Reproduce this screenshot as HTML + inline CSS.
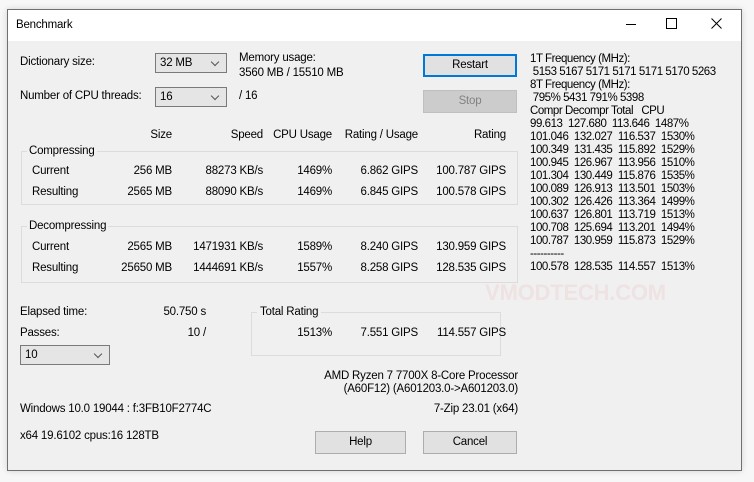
<!DOCTYPE html>
<html><head><style>
body{margin:0;width:754px;height:482px;background:#f7f7f7;font-family:"Liberation Sans",sans-serif;font-size:11.5px;letter-spacing:-0.2px;color:#000;position:relative;overflow:hidden}
.win{position:absolute;left:7px;top:9px;width:733px;height:460px;border:1px solid #707070;background:#f0f0f0;box-shadow:0 0 6px rgba(0,0,0,.15)}
.tb{position:absolute;left:0;top:0;width:733px;height:31px;background:#fff}
.t{position:absolute;white-space:nowrap;line-height:14px}
.r{text-align:right}
.cb{position:absolute;height:20px;border:1px solid #7a7a7a;background:#e5e5e5;box-sizing:border-box;padding:2px 4px;line-height:14px}
.cb:after{content:"";position:absolute;right:8px;top:5px;width:5px;height:5px;border-right:1px solid #555;border-bottom:1px solid #555;transform:rotate(45deg)}
.btn{position:absolute;height:23px;box-sizing:border-box;border:1px solid #adadad;background:#e1e1e1;text-align:center;line-height:20px}
.gb{position:absolute;border:1px solid #dcdcdc;box-sizing:border-box}
.mono{position:absolute;left:530px;white-space:pre;line-height:13px;font-size:11.5px;letter-spacing:-0.45px}
</style></head><body>
<div class="win">
<div class="tb"></div>
</div>
<div class="t" style="left:16px;top:18px">Benchmark</div>
<div style="position:absolute;left:626px;top:24px;width:10px;height:1px;background:#000"></div>
<div style="position:absolute;left:666px;top:18px;width:9px;height:9px;border:1px solid #000"></div>
<svg style="position:absolute;left:711px;top:18px" width="11" height="11"><path d="M0.5 0.5L10.5 10.5M10.5 0.5L0.5 10.5" stroke="#000" stroke-width="1"/></svg>

<div class="t" style="left:20px;top:55px">Dictionary size:</div>
<div class="cb" style="left:155px;top:53px;width:72px">32 MB</div>
<div class="t" style="left:239px;top:51px">Memory usage:</div>
<div class="t" style="left:239px;top:66px">3560 MB / 15510 MB</div>
<div class="t" style="left:20px;top:89px">Number of CPU threads:</div>
<div class="cb" style="left:155px;top:87px;width:72px">16</div>
<div class="t" style="left:239px;top:89px">/ 16</div>
<div class="btn" style="left:423px;top:54px;width:94px;border:2px solid #0078d7;line-height:19px">Restart</div>
<div class="btn" style="left:423px;top:90px;width:94px;background:#cccccc;border-color:#bfbfbf;color:#838383">Stop</div>

<div class="t r" style="right:582px;top:128px">Size</div>
<div class="t r" style="right:491px;top:128px">Speed</div>
<div class="t r" style="right:422px;top:128px">CPU Usage</div>
<div class="t r" style="right:336px;top:128px">Rating / Usage</div>
<div class="t r" style="right:248px;top:128px">Rating</div>

<div class="gb" style="left:21px;top:151px;width:497px;height:54px"></div>
<div class="t" style="left:27px;top:144px;background:#f0f0f0;padding:0 2px">Compressing</div>
<div class="t" style="left:32px;top:164px">Current</div>
<div class="t r" style="right:582px;top:164px">256 MB</div>
<div class="t r" style="right:491px;top:164px">88273 KB/s</div>
<div class="t r" style="right:422px;top:164px">1469%</div>
<div class="t r" style="right:336px;top:164px">6.862 GIPS</div>
<div class="t r" style="right:248px;top:164px">100.787 GIPS</div>
<div class="t" style="left:32px;top:185px">Resulting</div>
<div class="t r" style="right:582px;top:185px">2565 MB</div>
<div class="t r" style="right:491px;top:185px">88090 KB/s</div>
<div class="t r" style="right:422px;top:185px">1469%</div>
<div class="t r" style="right:336px;top:185px">6.845 GIPS</div>
<div class="t r" style="right:248px;top:185px">100.578 GIPS</div>

<div class="gb" style="left:21px;top:226px;width:497px;height:57px"></div>
<div class="t" style="left:27px;top:219px;background:#f0f0f0;padding:0 2px">Decompressing</div>
<div class="t" style="left:32px;top:240px">Current</div>
<div class="t r" style="right:582px;top:240px">2565 MB</div>
<div class="t r" style="right:491px;top:240px">1471931 KB/s</div>
<div class="t r" style="right:422px;top:240px">1589%</div>
<div class="t r" style="right:336px;top:240px">8.240 GIPS</div>
<div class="t r" style="right:248px;top:240px">130.959 GIPS</div>
<div class="t" style="left:32px;top:261px">Resulting</div>
<div class="t r" style="right:582px;top:261px">25650 MB</div>
<div class="t r" style="right:491px;top:261px">1444691 KB/s</div>
<div class="t r" style="right:422px;top:261px">1557%</div>
<div class="t r" style="right:336px;top:261px">8.258 GIPS</div>
<div class="t r" style="right:248px;top:261px">128.535 GIPS</div>

<div class="t" style="left:20px;top:305px">Elapsed time:</div>
<div class="t r" style="right:548px;top:305px">50.750 s</div>
<div class="t" style="left:20px;top:326px">Passes:</div>
<div class="t r" style="right:548px;top:326px">10 /</div>
<div class="cb" style="left:20px;top:345px;width:90px">10</div>

<div class="gb" style="left:251px;top:312px;width:250px;height:44px"></div>
<div class="t" style="left:257px;top:305px;background:#f0f0f0;padding:0 3px">Total Rating</div>
<div class="t r" style="right:422px;top:326px">1513%</div>
<div class="t r" style="right:336px;top:326px">7.551 GIPS</div>
<div class="t r" style="right:248px;top:326px">114.557 GIPS</div>

<div class="t r" style="right:236px;top:369px">AMD Ryzen 7 7700X 8-Core Processor</div>
<div class="t r" style="right:236px;top:382px">(A60F12) (A601203.0-&gt;A601203.0)</div>
<div class="t" style="left:20px;top:402px">Windows 10.0 19044 : f:3FB10F2774C</div>
<div class="t r" style="right:236px;top:402px">7-Zip 23.01 (x64)</div>
<div class="t" style="left:20px;top:429px">x64 19.6102 cpus:16 128TB</div>
<div class="btn" style="left:315px;top:431px;width:91px">Help</div>
<div class="btn" style="left:423px;top:431px;width:94px">Cancel</div>

<div class="t" style="left:485px;top:281px;font-size:22px;font-weight:bold;color:rgba(220,60,60,.08);line-height:24px">VMODTECH.COM</div>
<div class="mono" style="top:53px">1T Frequency (MHz):
 5153 5167 5171 5171 5171 5170 5263
8T Frequency (MHz):
 795% 5431 791% 5398
Compr Decompr Total   CPU
99.613  127.680  113.646  1487%
101.046  132.027  116.537  1530%
100.349  131.435  115.892  1529%
100.945  126.967  113.956  1510%
101.304  130.449  115.876  1535%
100.089  126.913  113.501  1503%
100.302  126.426  113.364  1499%
100.637  126.801  113.719  1513%
100.708  125.694  113.201  1494%
100.787  130.959  115.873  1529%
----------
100.578  128.535  114.557  1513%</div>
</body></html>
